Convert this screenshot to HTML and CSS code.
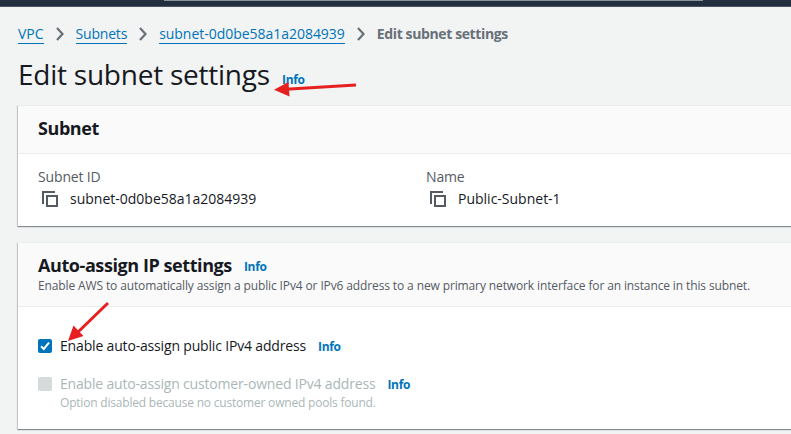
FILE: index.html
```html
<!DOCTYPE html>
<html lang="en">
<head>
<meta charset="utf-8">
<title>Edit subnet settings</title>
<link rel="stylesheet" href="styles.css">
</head>
<body>
<header class="topbar"><div class="search"></div></header>
<main class="page">
  <nav class="crumbs">
    <a class="link c1">VPC</a>
    <svg class="chev" viewBox="0 0 10 14"><path d="M2 1l5.500 6-5.500 6"/></svg>
    <a class="link c2">Subnets</a>
    <svg class="chev" viewBox="0 0 10 14"><path d="M2 1l5.500 6-5.500 6"/></svg>
    <a class="link c3">subnet-0d0be58a1a2084939</a>
    <svg class="chev" viewBox="0 0 10 14"><path d="M2 1l5.500 6-5.500 6"/></svg>
    <span class="current">Edit subnet settings</span>
  </nav>
  <div class="title"><h1>Edit subnet settings</h1><a class="info">Info</a></div>
  <section class="card subnet">
    <header class="card-head"><h2>Subnet</h2></header>
    <div class="fields">
      <div class="field">
        <div class="label">Subnet ID</div>
        <div class="value"><svg class="copy" viewBox="0 0 18 18"><path d="M6 6h10v10H6zM2 14V2h12"/></svg><span>subnet-0d0be58a1a2084939</span></div>
      </div>
      <div class="field">
        <div class="label">Name</div>
        <div class="value"><svg class="copy" viewBox="0 0 18 18"><path d="M6 6h10v10H6zM2 14V2h12"/></svg><span>Public-Subnet-1</span></div>
      </div>
    </div>
  </section>
  <section class="card auto">
    <header class="card-head">
      <div class="row"><h2>Auto-assign IP settings</h2><a class="info">Info</a></div>
      <p class="desc">Enable AWS to automatically assign a public IPv4 or IPv6 address to a new primary network interface for an instance in this subnet.</p>
    </header>
    <div class="options">
      <div class="option"><span class="box checked"><svg viewBox="0 0 14 14"><path d="M3 7.200l2.800 2.800 5.200-6.300"/></svg></span><span class="text">Enable auto-assign public IPv4 address</span><a class="info">Info</a></div>
      <div class="option off"><span class="box"></span><span class="text">Enable auto-assign customer-owned IPv4 address</span><a class="info">Info</a></div>
      <p class="hint">Option disabled because no customer owned pools found.</p>
    </div>
  </section>
</main>
<svg class="arrows" viewBox="0 0 791 434">
  <path class="shaft" d="M356 85L286 89.200M108 303L77 333"/>
  <path class="head" d="M274 89.800L288.500 82l1 14.500zM68 341l5.500-15.500 10 10.500z"/>
</svg>
</body>
</html>
```
FILE: styles.css
```css
* { box-sizing: border-box; }
body { margin: 0; height: 434px; overflow: hidden; background: #f2f3f3; color: #16191f; font: 14px/22px "Open Sans", sans-serif; }
h1, h2, p { margin: 0; }
.topbar { height: 7px; background: #232f3e; border-bottom: 1px solid #4b5563; }
.search { width: 539px; height: 1px; margin-left: 164px; background: #879596; }
.page { padding: 16px 0 0 18px; }
.crumbs { display: flex; align-items: center; height: 22px; white-space: nowrap; }
.chev { width: 10px; height: 14px; fill: none; stroke: #687078; stroke-width: 2.2; margin: 0 11px; }
.link { color: #0073bb; height: 21px; line-height: 21px; margin-bottom: 1px; border-bottom: 1px solid #0073bb; }
.c2 { letter-spacing: -0.2px; }
.c3 { letter-spacing: -0.03px; }
.current { font-weight: 700; color: #687078; letter-spacing: -0.38px; }
.title { display: flex; height: 60px; padding-top: 11px; }
h1 { font-size: 28px; line-height: 36px; font-weight: 400; letter-spacing: -0.24px; white-space: nowrap; width: 264px; }
.info { color: #0073bb; font-size: 12px; font-weight: 700; letter-spacing: -0.3px; }
.title .info { padding-top: 13px; }
.card { width: 800px; background: #fff; border-top: 1px solid #eaeded; box-shadow: 0 1px 1px #001c2460, -1px 1px 1px #001c2426; }
.card-head { background: #fafafa; border-bottom: 1px solid #eaeded; padding: 10px 20px; }
.subnet { height: 121px; }
.subnet .card-head { height: 48px; }
h2 { font-size: 18px; line-height: 24px; font-weight: 700; letter-spacing: -0.42px; white-space: nowrap; }
.fields { display: grid; grid-template-columns: 388px 388px; padding: 12px 20px; }
.label { color: #545b64; letter-spacing: -0.15px; }
.value { display: flex; gap: 11px; align-items: center; padding-left: 3px; }
.copy { width: 18px; height: 18px; fill: none; stroke: #545b64; stroke-width: 2; }
.auto { margin-top: 16px; height: 187px; }
.auto .card-head { height: 64px; }
.row { display: flex; gap: 12px; align-items: center; }
.row .info { padding-top: 3px; height: 24px; }
.desc { font-size: 12px; line-height: 18px; color: #545b64; letter-spacing: -0.123px; white-space: nowrap; }
.options { padding: 28px 20px; }
.option { display: flex; align-items: center; height: 22px; white-space: nowrap; }
.text { letter-spacing: -0.17px; }
.option .info { margin-left: 12px; padding-top: 1px; }
.off { margin-top: 16px; color: #aab7b8; }
.off .text { letter-spacing: -0.18px; }
.box { width: 14px; height: 14px; background: #d5dbdb; border-radius: 2px; margin-right: 8px; display: flex; }
.checked { background: #0073bb; }
.box svg { fill: none; stroke: #fff; stroke-width: 2; }
.hint { font-size: 12px; line-height: 16px; color: #aab7b8; letter-spacing: -0.2px; padding-left: 22px; }
.arrows { position: absolute; left: 0; top: 0; width: 791px; height: 434px; pointer-events: none; }
.shaft { stroke: #e62020; stroke-width: 3; }
.head { fill: #e62020; }
```
